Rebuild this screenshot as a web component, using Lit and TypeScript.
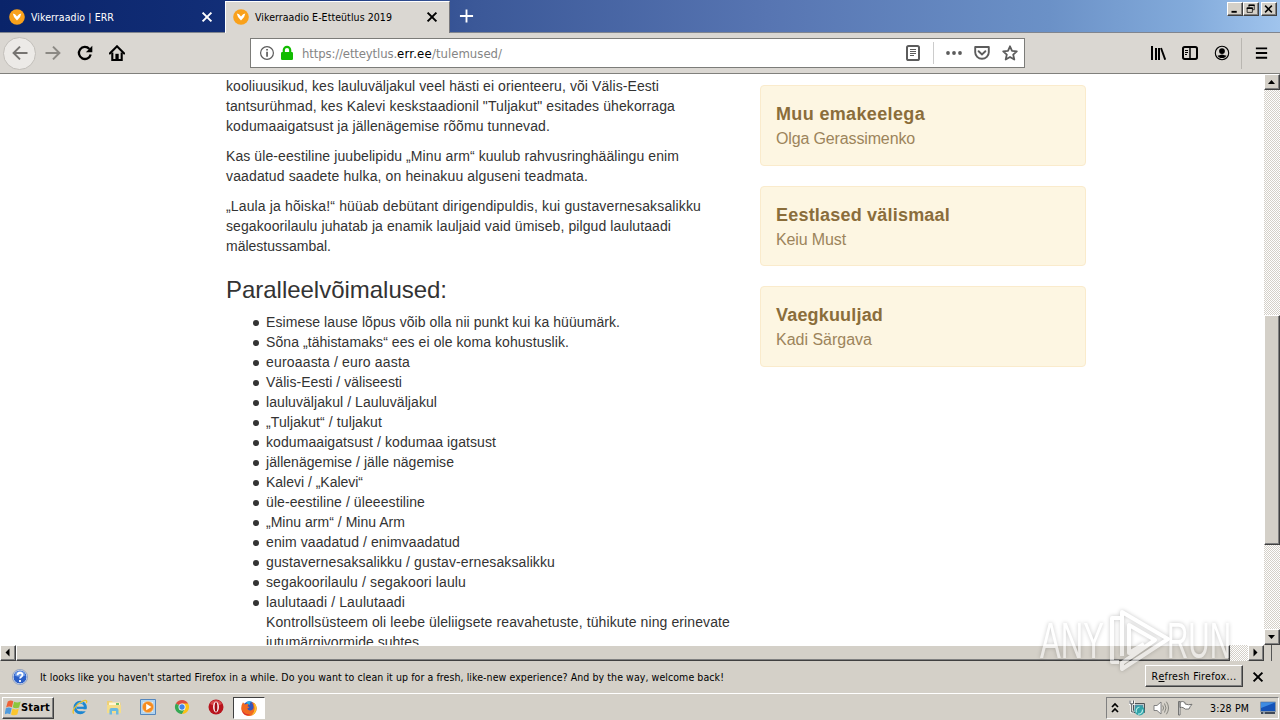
import { LitElement, html, svg, css, TemplateResult } from 'lit';
import { customElement, property } from 'lit/decorators.js';

interface TextLine {
  text: string;
  width: number;
}

interface Winner {
  title: string;
  titleWidth: number;
  name: string;
  nameWidth: number;
}

const line = (text: string, width: number): TextLine => ({ text, width });

const PARAGRAPHS: TextLine[][] = [
  [
    line('kooliuusikud, kes lauluväljakul veel hästi ei orienteeru, või Välis-Eesti', 433),
    line('tantsurühmad, kes Kalevi keskstaadionil "Tuljakut" esitades ühekorraga', 449),
    line('kodumaaigatsust ja jällenägemise rõõmu tunnevad.', 324),
  ],
  [
    line('Kas üle-eestiline juubelipidu „Minu arm“ kuulub rahvusringhäälingu enim', 453),
    line('vaadatud saadete hulka, on heinakuu alguseni teadmata.', 362),
  ],
  [
    line('„Laula ja hõiska!“ hüüab debütant dirigendipuldis, kui gustavernesaksalikku', 475),
    line('segakoorilaulu juhatab ja enamik lauljaid vaid ümiseb, pilgud laulutaadi', 445),
    line('mälestussambal.', 105),
  ],
];

const ALTERNATIVES: TextLine[][] = [
  [line('Esimese lause lõpus võib olla nii punkt kui ka hüüumärk.', 354)],
  [line('Sõna „tähistamaks“ ees ei ole koma kohustuslik.', 303)],
  [line('euroaasta / euro aasta', 144)],
  [line('Välis-Eesti / väliseesti', 136)],
  [line('lauluväljakul / Lauluväljakul', 171)],
  [line('„Tuljakut“ / tuljakut', 116)],
  [line('kodumaaigatsust / kodumaa igatsust', 230)],
  [line('jällenägemise / jälle nägemise', 188)],
  [line('Kalevi / „Kalevi“', 97)],
  [line('üle-eestiline / üleeestiline', 159)],
  [line('„Minu arm“ / Minu Arm', 139)],
  [line('enim vaadatud / enimvaadatud', 194)],
  [line('gustavernesaksalikku / gustav-ernesaksalikku', 289)],
  [line('segakoorilaulu / segakoori laulu', 200)],
  [
    line('laulutaadi / Laulutaadi', 139),
    line('Kontrollsüsteem oli leebe üleliigsete reavahetuste, tühikute ning erinevate', 464),
    line('jutumärgivormide suhtes.', 157),
  ],
];

const WINNERS: Winner[] = [
  { title: 'Muu emakeelega', titleWidth: 149, name: 'Olga Gerassimenko', nameWidth: 139 },
  { title: 'Eestlased välismaal', titleWidth: 174, name: 'Keiu Must', nameWidth: 70 },
  { title: 'Vaegkuuljad', titleWidth: 107, name: 'Kadi Särgava', nameWidth: 96 },
];

/** Single line of text fitted to a given width by spreading its letters. */
@customElement('fit-text')
export class FitText extends LitElement {
  @property({ type: Number }) width = 0;
  @property({ type: String }) text = '';

  static styles = css`
    :host {
      display: inline-block;
      white-space: pre;
    }
  `;

  updated(): void {
    this.style.letterSpacing = '0px';
    const natural = this.getBoundingClientRect().width;
    const count = this.text.length;
    if (this.width && count) {
      this.style.letterSpacing = `${(this.width - natural) / count}px`;
    }
  }

  render(): TemplateResult {
    return html`${this.text}`;
  }
}

const fit = (text: string, width: number, className = ''): TemplateResult =>
  html`<fit-text class=${className} .text=${text} .width=${width}></fit-text>`;

const ICONS = {
  favicon: svg`
    <circle cx="8" cy="8" r="7.8" fill="#f9a11b" />
    <path d="M3.8 4.6 6 5.3l2 2.3 2.1-2.3 2.2-.7-1.2 3.5L8 11.6 5 8.1z" fill="#fff" />`,
  close: svg`<path d="m3.6 3.6 8.8 8.8m0-8.8-8.8 8.8" fill="none" stroke="currentColor" stroke-width="2" />`,
  plus: svg`<path d="M8 1v14M1 8h14" stroke="currentColor" stroke-width="2" />`,
  back: svg`<path d="M15.5 8H1.5M8 1.6 1.6 8 8 14.4" fill="none" stroke="currentColor" stroke-width="2" />`,
  forward: svg`<path d="M.5 8h14M8 1.6 14.4 8 8 14.4" fill="none" stroke="currentColor" stroke-width="2" />`,
  reload: svg`
    <path d="M12.4 4A6 6 0 1 0 13.7 9.5" fill="none" stroke="currentColor" stroke-width="2.3" />
    <path d="M15.3.8v6.4H8.9z" fill="currentColor" />`,
  home: svg`
    <path d="M.8 8.4 8 1.3l7.2 7.1" fill="none" stroke="currentColor" stroke-width="2.1" stroke-linecap="round" />
    <path d="M3.3 7.5V15h9.4V7.5" fill="none" stroke="currentColor" stroke-width="2.1" />
    <path d="M6.4 8.8h3.3V15H6.4z" fill="currentColor" />`,
  info: svg`
    <circle cx="8" cy="8" r="6.4" fill="none" stroke="currentColor" stroke-width="1.2" />
    <path d="M7.2 6.8h1.7v5H7.2zM7.2 3.9h1.7v1.7H7.2z" fill="currentColor" />`,
  lock: svg`
    <rect x="2" y="7" width="12" height="8" rx="1.2" fill="#12bc00" />
    <path d="M4.8 8V5a3.2 3.2 0 0 1 6.4 0v3" fill="none" stroke="#12bc00" stroke-width="2.2" />`,
  reader: svg`
    <rect x="2" y="1" width="12" height="14" rx="1.6" fill="none" stroke="currentColor" stroke-width="2" />
    <path d="M5 4.5h6M5 6.5h6M5 8.5h6M5 10.5h4" stroke="currentColor" />`,
  dots: svg`<g fill="currentColor"><circle cx="2" cy="8" r="1.9" /><circle cx="8" cy="8" r="1.9" /><circle cx="14" cy="8" r="1.9" /></g>`,
  pocket: svg`
    <path d="M1.2 2h13.6v5.2a6.8 6.6 0 0 1-13.6 0z" fill="none" stroke="currentColor" stroke-width="1.9" stroke-linejoin="round" />
    <path d="M4.6 6.2 8 9.5l3.4-3.3" fill="none" stroke="currentColor" stroke-width="1.9" stroke-linecap="round" />`,
  star: svg`<path d="m8 1.3 2 4.5 4.8.5-3.6 3.3 1.1 4.9L8 12l-4.300 2.500 1.100-4.900L1.200 6.300 6 5.800z" fill="none" stroke="currentColor" stroke-width="1.8" stroke-linejoin="round" />`,
  library: svg`
    <path d="M2 1v14M6 3v12M9 3v12" stroke="currentColor" stroke-width="2" />
    <path d="m11 3 4.2 11.7" stroke="currentColor" stroke-width="1.9" />`,
  sidebar: svg`
    <rect x="1" y="2" width="14" height="12" rx="1.7" fill="none" stroke="currentColor" stroke-width="2" />
    <path d="M8 2v12" stroke="currentColor" stroke-width="1.5" /><path d="M3 5.5h3M3 7.5h3M3 9.5h2" stroke="currentColor" />`,
  account: svg`
    <circle cx="8" cy="8" r="6.7" fill="none" stroke="currentColor" stroke-width="1.1" />
    <circle cx="8" cy="6.100" r="2.900" fill="currentColor" /><path d="M3.600 10.200c2 .8 2.500-.8 4.400-.8s2.400 1.600 4.400.8C11.700 12.400 10 13.100 8 13.100s-3.700-.7-4.400-2.900z" fill="currentColor" />`,
  menu: svg`<path d="M2 3h12M2 8h12M2 13h12" stroke="currentColor" stroke-width="2" />`,
  minimize: svg`<path d="M4 10.500h7v2.500H4z" fill="currentColor" />`,
  restore: svg`
    <path d="M6 3h7v6h-2.500M6 2.500V6" fill="none" stroke="currentColor" /><path d="M5.500 3h8" stroke="currentColor" stroke-width="2" />
    <path d="M3.500 6.500h7v6h-7z" fill="none" stroke="currentColor" /><path d="M3 7h8" stroke="currentColor" stroke-width="2" />`,
  windowClose: svg`<path d="m3.500 3.500 9 9m0-9-9 9" stroke="currentColor" stroke-width="2" />`,
  up: svg`<path d="M4 10h7L7.500 6z" fill="currentColor" />`,
  down: svg`<path d="M4 6h7l-3.500 4z" fill="currentColor" />`,
  left: svg`<path d="M9.500 3.500v8l-4-4z" fill="currentColor" />`,
  right: svg`<path d="M5.500 3.500v8l4-4z" fill="currentColor" />`,
  question: svg`
    <circle cx="8" cy="8" r="7" fill="#2b5fc7" stroke="#dce4f4" /><circle cx="8" cy="8" r="7.6" fill="none" stroke="#7d92b8" stroke-width=".7" />
    <path d="M2.5 6.5a5.6 5.6 0 0 1 11 0Q8 9 2.5 6.5z" fill="#6f9ce8" />
    <path d="M5.5 6.2C5.6 2.9 10.7 3 10.5 6c-.1 1.8-2.4 1.6-2.4 3.5M8 11v2" fill="none" stroke="#fff" stroke-width="1.8" />`,
  windows: svg`
    <path d="M2.800 1.500Q5.700-.5 8.300 1.300L6.900 7.300Q4 5.700 1.100 7.500z" fill="#ee6237" />
    <path d="M9.100 1.700q3.300 1.700 6.600-.2l-1.600 6q-3.200 1.700-6.400-.2z" fill="#8cc63e" />
    <path d="M.9 8.300q2.900-1.700 5.800 0l-1.500 6q-2.800-1.600-5.700.1z" fill="#4f9bdd" />
    <path d="M7.500 8.600q3.200 1.600 6.300-.1l-1.500 6q-3.200 1.700-6.300-.1z" fill="#fbc62e" />`,
  explorer: svg`
    <circle cx="8.2" cy="8.5" r="5.2" fill="none" stroke="#1c86d1" stroke-width="3" /><path d="M5 8.8h9" stroke="#1c86d1" stroke-width="2.2" />
    <path d="M9.5 10.3H15v2H9.500z" fill="#d4d0c8" /><path d="M5.500 5.500A4.800 4.800 0 0 1 11 4" fill="none" stroke="#84d0f7" stroke-width="1.200" />
    <path d="M1.700 14.600C-.5 12 4 5.500 10 2.500c3.800-2 5.600-1.200 4.300 1.600" fill="none" stroke="#ecc128" stroke-width="1.300" />`,
  folder: svg`
    <path d="M1 2h5l1 1.500h7.500V13H1z" fill="#eed078" /><path d="M3 3.500h11v4H3z" fill="#fff7d3" /><path d="M1 6h14v8H1z" fill="#f5dd89" />
    <path d="M3.500 15.500V11Q3.500 9 5.500 9h5q2 0 2 2v4.500H10V12H6v3.500z" fill="#6bb9df" /><path d="M10 4h3v2h-3z" fill="#73c267" />`,
  player: svg`
    <path d="M.5.5h15v15H.5z" fill="#b2d4ef" stroke="#5486bd" /><path d="M3 3h10v10H3z" fill="#dceaf6" />
    <circle cx="8" cy="8" r="5.6" fill="#f58b1f" stroke="#fcc07c" stroke-width=".6" /><path d="M6.200 4.700 11.500 8l-5.300 3.300z" fill="#fff" />`,
  chrome: svg`
    <path d="M8 8 1.900 4.500A7 7 0 0 1 14.100 4.500z" fill="#dd4b3e" /><path d="M8 8 1.900 4.500A7 7 0 0 0 8 15l3-5z" fill="#35a853" />
    <path d="M8 4.500h6.100A7 7 0 0 1 8 15l3.100-5.300z" fill="#fbc116" /><circle cx="8" cy="8" r="3.500" fill="#fff" /><circle cx="8" cy="8" r="2.700" fill="#4285e8" />`,
  opera: svg`
    <circle cx="8" cy="8" r="7.5" fill="#b8141d" /><path d="M2 5a6.700 6.700 0 0 1 12 0Q8 8 2 5z" fill="#d8484b" />
    <ellipse cx="8" cy="8" rx="2.900" ry="5.400" fill="#fff" /><ellipse cx="8" cy="8" rx="1.400" ry="4.700" fill="#a10b15" />`,
  firefox: svg`
    <circle cx="8.300" cy="7.700" r="6.400" fill="#3657bd" /><path d="M5 3q2-3 6-1-3 0-2 3z" fill="#24b6ec" />
    <path d="M2 2.200 3.900 4.400q2-.9 3.800-.3L6.500 6.300l2 1-2.300 1.500q1.200 2.300 4.200 1.500 2.800-1 1.900-4.300 0-2-2-3.800 5 .3 5.500 6A7.800 7.800 0 0 1 .3 9.500Q-.2 5.500 2 2.200z" fill="#f16a21" />
    <path d="M12.500 2.600q3.500 2.200 3 6-.5 5-5 6.700 3-2.500 3.100-6.300.1-3.500-1.100-6.400z" fill="#ffc52d" /><path d="M1 10q2.500 4.800 8 4.500-4 2.300-7-1.500z" fill="#d82a34" />`,
  chevrons: svg`<path d="m5 7 3-3 3 3M5 12l3-3 3 3" fill="none" stroke="currentColor" stroke-width="1.700" />`,
  network: svg`
    <path d="M4.500 3.500h11v9h-11z" fill="#b9c6c9" stroke="#4e5356" /><path d="M6 5h8v6H6z" fill="#538fa6" />
    <circle cx="10.500" cy="10.500" r="5" fill="#32a4a9" /><path d="M7.500 12.500a4 4 0 0 1 3-5.500M9 14a4 4 0 0 0 4.500-4.500" fill="none" stroke="#b4e7e5" stroke-width="1.200" />
    <path d="M1 .5v3.300h3.500V.5M2.700 4v8H5" fill="none" stroke="#fff" stroke-width="2.600" /><path d="M1 .5v3.300h3.500V.5M2.700 4v8H5" fill="none" stroke="#53575a" />`,
  speaker: svg`
    <path d="M1 5.500h3L8 2v12l-4-3.500H1z" fill="#fff" stroke="#777" stroke-width=".9" />
    <path d="M9.700 5.500q1.800 2.500 0 5M11.500 3.500q3 4.500 0 9M13.400 1.700q4.200 6.300 0 12.600" fill="none" stroke="#85857f" />`,
  flag: svg`<path d="M1.500 1.500H3V15H1.500zM3 2q3-1.300 5 .5v1.400q3.200 1.500 7 .4-2 2-3 4.700-4 1-6-1.400-1.500-.6-3 0z" fill="#fff" stroke="#686866" stroke-width=".9" />`,
  desktop: svg`
    <path d="M.5 2h15v9.500H.5z" fill="#1553b8" stroke="#8596a8" /><path d="M1 2.500h14L1 8z" fill="#3d8be2" />
    <path d="M1 13h14" stroke="#404957" stroke-width="2" /><path d="M3 13h2" stroke="#d6e7f6" />`,
};

const icon = (name: keyof typeof ICONS, className = ''): TemplateResult =>
  html`<svg class="icon ${className}" viewBox="0 0 16 16" aria-hidden="true">${ICONS[name]}</svg>`;

@customElement('app-root')
export class AppRoot extends LitElement {
  static styles = css`
    :host {
      display: grid;
      grid-template-rows: 33px 41px 571px 16px 32px 27px;
      width: 1280px;
      height: 720px;
      overflow: hidden;
      background: #d4d0c8;
      color: #000;
      font-family: 'DejaVu Sans Condensed', 'DejaVu Sans', sans-serif;
      font-stretch: condensed;
      font-size: 10.5px;
      line-height: 14px;
    }

    * {
      box-sizing: border-box;
    }

    .icon {
      display: block;
      flex: none;
      width: 16px;
      height: 16px;
    }

    .raised {
      border: 1px solid;
      border-color: #fff #404040 #404040 #fff;
      background: #d4d0c8;
      box-shadow: inset -1px -1px #808080;
    }

    /* Title bar and tabs */
    .titlebar {
      display: flex;
      border-bottom: 1px solid #80858f;
      background: linear-gradient(90deg, #0a246a 0%, #14317b 22%, #3b5898 37%, #5775b2 60%, #6b91c7 82%, #83abdb 93%, #a0c4ed 100%);
    }

    .tab {
      display: flex;
      align-items: center;
      width: 225px;
      height: 32px;
      padding: 2px 10px 0 9px;
      color: #fff;
    }

    .tab--active {
      height: 32px;
      margin-top: 1px;
      padding: 0 9px 1px 7px;
      border-top: 1px solid #fff;
      border-left: 1px solid #fff;
      border-right: 1px solid #77777c;
      background: #dad7d2;
      color: #000;
    }

    .tab .label {
      flex: 1;
      margin-left: 6px;
    }

    .new-tab {
      width: 15px;
      margin: 8px 0 0 9px;
      color: #fff;
    }

    .window-buttons {
      display: flex;
      margin: 2px 3px 0 auto;
    }

    .window-buttons .raised {
      width: 16px;
      height: 14px;
    }

    .window-buttons .raised:last-child {
      margin-left: 2px;
    }

    .window-buttons .icon {
      width: 13px;
      height: 12px;
    }

    /* Navigation toolbar */
    .toolbar {
      display: flex;
      align-items: center;
      border-bottom: 1px solid #80807c;
      background: #dad7d2;
    }

    .back {
      display: flex;
      align-items: center;
      justify-content: center;
      width: 33px;
      height: 33px;
      margin-left: 3px;
      border: 1px solid #c2bfba;
      border-radius: 50%;
      background: #eceae7;
      color: #767471;
    }

    .forward {
      margin-left: 9px;
      color: #8b8984;
    }

    .reload,
    .home {
      margin-left: 16px;
    }

    .address {
      display: flex;
      align-items: center;
      width: 775px;
      height: 30px;
      margin-left: 125px;
      padding: 0 6px 0 8px;
      border: 1px solid #7c7c79;
      background: #fff;
      color: #5c5c5c;
    }

    .address .lock {
      margin-left: 4px;
    }

    .url {
      flex: 1;
      margin-left: 7px;
      padding-top: 1px;
      color: #858585;
      font-size: 13px;
    }

    .url .domain {
      color: #000;
    }

    .address .divider {
      width: 1px;
      height: 22px;
      margin: 0 12px;
      background: #ccc;
    }

    .address .pocket,
    .address .star {
      margin-left: 12px;
    }

    .tools {
      display: flex;
      align-items: center;
      gap: 16px;
      margin-left: 125px;
    }

    .tools .menu {
      width: 15px;
      margin-left: -4px;
    }

    .tools .divider {
      width: 1px;
      height: 31px;
      margin-left: -5px;
      background: #b9b6b1;
    }

    /* Page */
    .viewport {
      display: flex;
      min-height: 0;
    }

    .page {
      display: flex;
      align-items: flex-start;
      width: 1264px;
      height: 571px;
      overflow: hidden;
      padding-left: 226px;
      background: #fff;
      color: #333;
      font-family: 'Liberation Sans', Arial, sans-serif;
      font-size: 14px;
      line-height: 20px;
    }

    .article {
      width: 534px;
      padding-top: 2px;
    }

    .article p {
      margin: 0 0 10px;
    }

    .row {
      display: block;
      height: 20px;
    }

    .article h2 {
      margin: 21px 0 9px;
      font-size: 24px;
      font-weight: 400;
      line-height: 26px;
    }

    .article ul {
      margin: 0;
      padding-left: 27px;
      list-style: none;
    }

    .article li {
      display: flex;
      gap: 7px;
    }

    .article li::before {
      content: '';
      flex: none;
      width: 6px;
      height: 6px;
      margin-top: 8px;
      border-radius: 50%;
      background: #333;
    }

    .winners {
      display: flex;
      flex-direction: column;
      gap: 20px;
      width: 326px;
      padding-top: 11px;
    }

    .winner {
      height: 80.6px;
      padding: 16px 15px 14px;
      border: 1px solid #faebcc;
      border-radius: 4px;
      background: #fdf6e2;
      color: #8a6d3b;
    }

    .winner .title {
      height: 25px;
      font-size: 18px;
      font-weight: 700;
      line-height: 25px;
    }

    .winner .name {
      height: 23px;
      color: #9c845b;
      font-size: 16px;
      line-height: 23px;
    }

    /* Scrollbars */
    .vscroll,
    .hscroll {
      display: flex;
      background: repeating-conic-gradient(#fff 0 25%, #d4d0c8 0 50%) 0 0 / 2px 2px;
    }

    .vscroll {
      flex-direction: column;
      width: 16px;
    }

    .arrow {
      display: flex;
      align-items: center;
      justify-content: center;
      flex: none;
      width: 16px;
      height: 16px;
    }

    .vscroll .thumb {
      height: 230px;
      margin: 225px 0 84px;
    }

    .hscroll .thumb {
      width: 1214px;
      margin-right: 18px;
    }

    .corner {
      width: 16px;
      background: #d4d0c8;
      border-left: 7px solid #d4d0c8;
      box-shadow: inset 1px 0 #555;
    }

    /* Notification bar */
    .notice {
      display: flex;
      align-items: center;
      padding: 0 14px 0 12px;
    }

    .notice .message {
      flex: 1;
      margin-left: 12px;
    }

    .refresh {
      display: flex;
      align-items: center;
      justify-content: center;
      width: 98px;
      height: 22px;
      margin: -2px 7px 0 0;
    }

    .mnemonic {
      text-decoration: underline;
    }

    /* Taskbar */
    .taskbar {
      display: flex;
      align-items: center;
      border-top: 1px solid #fff;
    }

    .start {
      display: flex;
      align-items: center;
      width: 52px;
      height: 22px;
      margin: 1px 0 0 2px;
      padding-left: 2px;
      font-size: 11px;
      font-weight: 700;
    }

    .launchers {
      display: flex;
      align-items: center;
      gap: 18px;
      margin: 0 0 0 18px;
    }

    .running {
      display: flex;
      align-items: center;
      justify-content: center;
      width: 32px;
      height: 22px;
      margin: 1px 0 0 9px;
      border: 1px solid;
      border-color: #404040 #fff #fff #404040;
      background: #fff;
    }

    .tray {
      display: flex;
      align-items: center;
      width: 173px;
      height: 22px;
      margin: 1px 1px 0 auto;
      border: 1px solid;
      border-color: #808080 #fff #fff #808080;
    }

    .tray .network {
      margin-left: 6px;
    }

    .tray .speaker,
    .tray .flag {
      margin-left: 8px;
    }

    .tray .clock {
      margin-left: 17px;
    }

    .tray .desktop {
      margin-left: 11px;
    }

    /* Watermark laid over the page corner */
    .watermark {
      position: absolute;
      left: 1036px;
      top: 606px;
      width: 200px;
      height: 70px;
      overflow: visible;
      filter: drop-shadow(0 0 2px rgba(0, 0, 0, 0.4));
      opacity: 0.55;
      font-family: 'Liberation Sans', Arial, sans-serif;
      font-size: 50px;
    }
  `;

  private renderTitlebar(): TemplateResult {
    return html`
      <header class="titlebar">
        <div class="tab">${icon('favicon')}<span class="label">${fit('Vikerraadio | ERR', 83)}</span>${icon('close')}</div>
        <div class="tab tab--active">
          ${icon('favicon')}<span class="label">${fit('Vikerraadio E-Etteütlus 2019', 137)}</span>${icon('close')}
        </div>
        ${icon('plus', 'new-tab')}
        <div class="window-buttons">
          <div class="raised">${icon('minimize')}</div>
          <div class="raised">${icon('restore')}</div>
          <div class="raised">${icon('windowClose')}</div>
        </div>
      </header>
    `;
  }

  private renderToolbar(): TemplateResult {
    return html`
      <nav class="toolbar">
        <div class="back">${icon('back')}</div>
        ${icon('forward', 'forward')} ${icon('reload', 'reload')} ${icon('home', 'home')}
        <div class="address">
          ${icon('info')} ${icon('lock', 'lock')}
          <span class="url">
            ${fit('https://etteytlus.', 95)}<span class="domain">${fit('err.ee', 35)}</span>${fit('/tulemused/', 70)}
          </span>
          ${icon('reader')}
          <span class="divider"></span>
          ${icon('dots')} ${icon('pocket', 'pocket')} ${icon('star', 'star')}
        </div>
        <div class="tools">
          ${icon('library')} ${icon('sidebar')} ${icon('account')}
          <span class="divider"></span>
          ${icon('menu', 'menu')}
        </div>
      </nav>
    `;
  }

  private renderLines(lines: TextLine[]): TemplateResult[] {
    return lines.map((l) => html`<span class="row">${fit(l.text, l.width)}</span>`);
  }

  private renderPage(): TemplateResult {
    return html`
      <main class="viewport">
        <div class="page">
          <article class="article">
            ${PARAGRAPHS.map((p) => html`<p>${this.renderLines(p)}</p>`)}
            <h2>${fit('Paralleelvõimalused:', 221)}</h2>
            <ul>
              ${ALTERNATIVES.map((a) => html`<li><div>${this.renderLines(a)}</div></li>`)}
            </ul>
          </article>
          <aside class="winners">
            ${WINNERS.map(
              (w) => html`
                <section class="winner">
                  <div class="title">${fit(w.title, w.titleWidth)}</div>
                  <div class="name">${fit(w.name, w.nameWidth)}</div>
                </section>
              `
            )}
          </aside>
        </div>
        <div class="vscroll">
          <div class="arrow raised">${icon('up')}</div>
          <div class="thumb raised"></div>
          <div class="arrow raised">${icon('down')}</div>
        </div>
      </main>
      <div class="hscroll">
        <div class="arrow raised">${icon('left')}</div>
        <div class="thumb raised"></div>
        <div class="arrow raised">${icon('right')}</div>
        <div class="corner"></div>
      </div>
    `;
  }

  private renderNotice(): TemplateResult {
    return html`
      <div class="notice">
        ${icon('question')}
        <span class="message">
          ${fit(
            "It looks like you haven't started Firefox in a while. Do you want to clean it up for a fresh, like-new experience? And by the way, welcome back!",
            684
          )}
        </span>
        <div class="refresh raised">
          ${fit('R', 7)}${fit('e', 6, 'mnemonic')}${fit('fresh Firefox...', 72)}
        </div>
        ${icon('close')}
      </div>
    `;
  }

  private renderTaskbar(): TemplateResult {
    return html`
      <footer class="taskbar">
        <div class="start raised">${icon('windows')}${fit('Start', 29)}</div>
        <div class="launchers">
          ${icon('explorer')} ${icon('folder')} ${icon('player')} ${icon('chrome')} ${icon('opera')}
        </div>
        <div class="running">${icon('firefox')}</div>
        <div class="tray">
          ${icon('chevrons')} ${icon('network', 'network')} ${icon('speaker', 'speaker')} ${icon('flag', 'flag')}
          <span class="clock">${fit('3:28 PM', 39)}</span>
          ${icon('desktop', 'desktop')}
        </div>
      </footer>
    `;
  }

  private renderWatermark(): TemplateResult {
    return html`
      <svg class="watermark" viewBox="0 0 200 70" aria-hidden="true">
        <g fill="#fff">
          <text x="4" y="52" textLength="64" lengthAdjust="spacingAndGlyphs">ANY</text>
          <text x="131" y="52" textLength="64" lengthAdjust="spacingAndGlyphs">RUN</text>
        </g>
        <path
          d="M85 12H76V56H83M86 50V6L132 33 86 63V57L119 34 93 19V47L108 38"
          fill="none"
          stroke="#fff"
          stroke-width="4"
          stroke-linejoin="round"
        />
      </svg>
    `;
  }

  render(): TemplateResult {
    return html`
      ${this.renderTitlebar()} ${this.renderToolbar()} ${this.renderPage()} ${this.renderNotice()}
      ${this.renderTaskbar()} ${this.renderWatermark()}
    `;
  }
}

declare global {
  interface HTMLElementTagNameMap {
    'app-root': AppRoot;
    'fit-text': FitText;
  }
}
